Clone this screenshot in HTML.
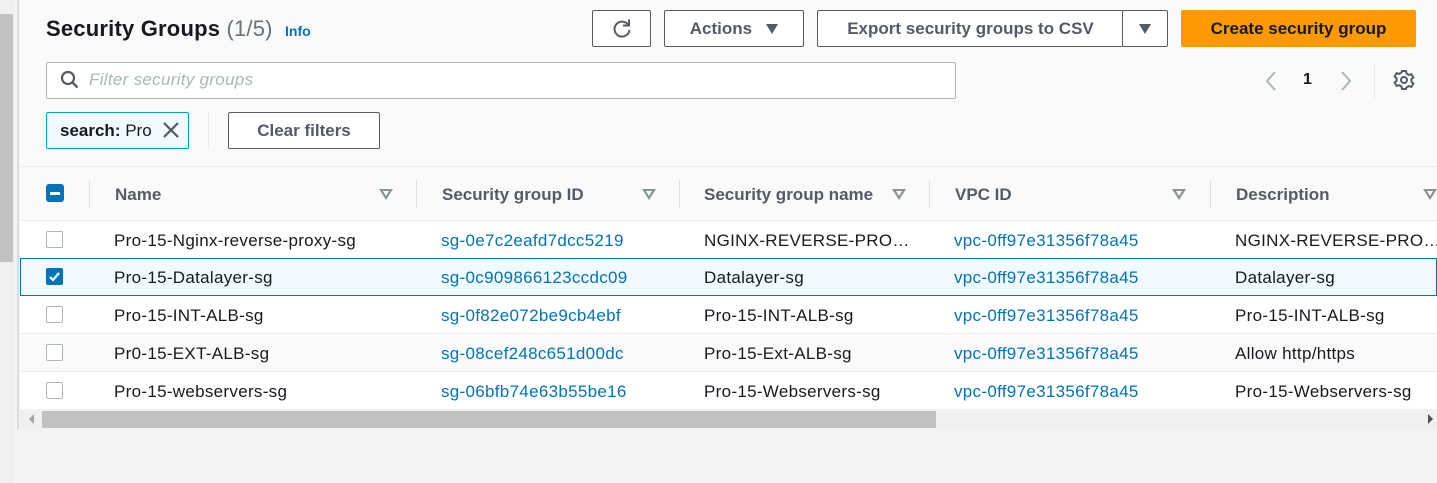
<!DOCTYPE html>
<html><head><style>
*{box-sizing:border-box;margin:0;padding:0}
body{width:1437px;height:483px;overflow:hidden;background:#f2f3f3;font-family:"Liberation Sans",sans-serif;position:relative;color:#16191f}
.abs{position:absolute}
.lsb{left:0;top:0;width:14px;height:483px;background:#f0f0f0}
.lsb .th{position:absolute;left:0;top:14px;width:13px;height:248px;background:#c1c1c1}
.vline{left:17px;top:0;width:2px;height:430px;background:#ddd}
.panel{left:20px;top:0;width:1417px;height:430px;background:#fafafa}
.btn{position:absolute;border:1px solid #545b64;border-radius:2px;background:#fff;font-weight:bold;font-size:17px;color:#545b64;display:flex;align-items:center;justify-content:center}
.tri{display:inline-block;width:0;height:0;border-left:6px solid transparent;border-right:6px solid transparent;border-top:10px solid #545b64}
.ftri{position:absolute;width:0;height:0;border-left:7px solid transparent;border-right:7px solid transparent;border-top:11px solid #879596}
.ftri::after{content:"";position:absolute;left:-3px;top:-9px;border-left:3px solid transparent;border-right:3px solid transparent;border-top:5px solid #fafafa}
.hd{position:absolute;top:185px;font-weight:bold;font-size:17px;color:#545b64}
.sep{position:absolute;top:180px;width:1px;height:28px;background:#e0e0e0}
.row{position:absolute;left:20px;width:1417px;height:38px;background:#fff;border-top:1px solid #eaeded;font-size:17px;letter-spacing:0.3px}
.row span{position:absolute;top:10px;white-space:nowrap}
.row .l{color:#0073bb}
.cb{position:absolute;left:26px;top:10px;width:17px;height:17px;border:1px solid #aab7b8;border-radius:2px;background:#fff}
</style></head><body>
<div class="abs lsb"><div class="th"></div></div>
<div class="abs vline"></div>
<div class="abs panel"></div>
<div class="abs" style="left:46px;top:16px;font-size:22px;font-weight:bold;letter-spacing:0.2px">Security Groups <span style="font-weight:normal;color:#687078">(1/5)</span></div>
<div class="abs" style="left:285px;top:23px;font-size:14px;font-weight:bold;color:#0073bb">Info</div>

<div class="btn" style="left:592px;top:10px;width:59px;height:37px"><svg width="22" height="22" viewBox="0 0 22 22"><path d="M17 6.5A7.5 7.5 0 1 0 18.5 12" fill="none" stroke="#545b64" stroke-width="2"/><path d="M12 5.5h6v-6" fill="none" stroke="#545b64" stroke-width="2" transform="translate(0 2)"/></svg></div>
<div class="btn" style="left:664px;top:10px;width:140px;height:37px">Actions&nbsp;&nbsp;&nbsp;<span class="tri"></span></div>
<div class="btn" style="left:817px;top:10px;width:306px;height:37px;border-right:none">Export security groups to CSV</div>
<div class="btn" style="left:1122px;top:10px;width:46px;height:37px"><span class="tri"></span></div>
<div class="btn" style="left:1181px;top:10px;width:235px;height:37px;border-color:#f90;color:#16191f;background:#f90">Create security group</div>

<div class="abs" style="left:46px;top:62px;width:910px;height:37px;background:#fff;border:1px solid #aab7b8;border-radius:2px"></div>
<svg class="abs" style="left:60px;top:70px" width="20" height="20" viewBox="0 0 20 20"><circle cx="8" cy="8" r="6" fill="none" stroke="#545b64" stroke-width="2.2"/><path d="M12.5 12.5l5 5" stroke="#545b64" stroke-width="2.4"/></svg>
<div class="abs" style="left:89px;top:70px;font-size:17px;font-style:italic;color:#aab7b8;letter-spacing:0.3px">Filter security groups</div>

<svg class="abs" style="left:1264px;top:70px" width="14" height="22"><path d="M11 2L3 11l8 9" fill="none" stroke="#aab7b8" stroke-width="2"/></svg>
<div class="abs" style="left:1303px;top:71px;font-size:16px;font-weight:bold">1</div>
<svg class="abs" style="left:1339px;top:70px" width="14" height="22"><path d="M3 2l8 9-8 9" fill="none" stroke="#aab7b8" stroke-width="2"/></svg>
<div class="abs" style="left:1374px;top:62px;width:1px;height:37px;background:#eaeded"></div>
<svg class="abs" style="left:1393px;top:69px" width="22" height="22" viewBox="0 0 22 22"><path d="M9 2h4l.6 2.6 2.2 1.3 2.6-.8 2 3.4-2 1.8v2.4l2 1.8-2 3.4-2.6-.8-2.2 1.3L13 20H9l-.6-2.6-2.2-1.3-2.6.8-2-3.4 2-1.8V9.3l-2-1.8 2-3.4 2.6.8 2.2-1.3z" fill="none" stroke="#545b64" stroke-width="2" stroke-linejoin="round"/><circle cx="11" cy="11" r="3" fill="none" stroke="#545b64" stroke-width="2"/></svg>

<div class="abs" style="left:46px;top:112px;width:143px;height:37px;background:#f1faff;border:1px solid #00a1c9;border-radius:2px;font-size:17px;padding:8px 0 0 13px"><b>search:</b> Pro</div>
<svg class="abs" style="left:162px;top:121px" width="18" height="18"><path d="M2 2l14 14M16 2L2 16" stroke="#545b64" stroke-width="2.2"/></svg>
<div class="abs" style="left:208px;top:112px;width:1px;height:37px;background:#eaeded"></div>
<div class="btn" style="left:228px;top:112px;width:152px;height:37px">Clear filters</div>

<div class="abs" style="left:20px;top:166px;width:1417px;height:1px;background:#eaeded"></div>
<div class="abs" style="left:46px;top:184px;width:18px;height:18px;background:#0073bb;border-radius:3px"><div style="position:absolute;left:4px;top:8px;width:10px;height:2.5px;background:#fff"></div></div>
<div class="sep" style="left:89px"></div><div class="sep" style="left:416px"></div><div class="sep" style="left:679px"></div><div class="sep" style="left:929px"></div><div class="sep" style="left:1210px"></div>
<div class="hd" style="left:115px">Name</div><div class="ftri" style="left:379px;top:189px"></div>
<div class="hd" style="left:442px">Security group ID</div><div class="ftri" style="left:642px;top:189px"></div>
<div class="hd" style="left:704px">Security group name</div><div class="ftri" style="left:892px;top:189px"></div>
<div class="hd" style="left:955px">VPC ID</div><div class="ftri" style="left:1172px;top:189px"></div>
<div class="hd" style="left:1236px">Description</div><div class="ftri" style="left:1423px;top:189px"></div>

<div class="row" style="top:220px"><div class="cb"></div><span style="left:94px">Pro-15-Nginx-reverse-proxy-sg</span><span class="l" style="left:421px">sg-0e7c2eafd7dcc5219</span><span style="left:684px">NGINX-REVERSE-PRO…</span><span class="l" style="left:934px">vpc-0ff97e31356f78a45</span><span style="left:1215px">NGINX-REVERSE-PRO…</span></div>
<div class="row" style="top:258px;background:#f1faff;border:1px solid #0073bb"><div class="cb" style="left:25px;top:9px;background:#0073bb;border-color:#0073bb"><svg width="15" height="15" style="position:absolute;left:0;top:0"><path d="M3 8l3 3 6-7" fill="none" stroke="#fff" stroke-width="2.2"/></svg></div><span style="left:93px;top:9px">Pro-15-Datalayer-sg</span><span class="l" style="left:420px;top:9px">sg-0c909866123ccdc09</span><span style="left:683px;top:9px">Datalayer-sg</span><span class="l" style="left:933px;top:9px">vpc-0ff97e31356f78a45</span><span style="left:1214px;top:9px">Datalayer-sg</span></div>
<div class="row" style="top:296px;border-top:none"><div class="cb"></div><span style="left:94px">Pro-15-INT-ALB-sg</span><span class="l" style="left:421px">sg-0f82e072be9cb4ebf</span><span style="left:684px">Pro-15-INT-ALB-sg</span><span class="l" style="left:934px">vpc-0ff97e31356f78a45</span><span style="left:1215px">Pro-15-INT-ALB-sg</span></div>
<div class="row" style="top:333px;background:#fafafa"><div class="cb"></div><span style="left:94px">Pr0-15-EXT-ALB-sg</span><span class="l" style="left:421px">sg-08cef248c651d00dc</span><span style="left:684px">Pro-15-Ext-ALB-sg</span><span class="l" style="left:934px">vpc-0ff97e31356f78a45</span><span style="left:1215px">Allow http/https</span></div>
<div class="row" style="top:371px"><div class="cb"></div><span style="left:94px">Pro-15-webservers-sg</span><span class="l" style="left:421px">sg-06bfb74e63b55be16</span><span style="left:684px">Pro-15-Webservers-sg</span><span class="l" style="left:934px">vpc-0ff97e31356f78a45</span><span style="left:1215px">Pro-15-Webservers-sg</span></div>

<div class="abs" style="left:20px;top:409px;width:1417px;height:21px;background:#f0f0f0"></div>
<div class="abs" style="left:42px;top:411px;width:894px;height:17px;background:#c1c1c1"></div>
<div class="abs" style="left:29px;top:414px;border-top:5px solid transparent;border-bottom:5px solid transparent;border-right:5px solid #a3a3a3"></div>
<div class="abs" style="left:1428px;top:414px;border-top:5px solid transparent;border-bottom:5px solid transparent;border-left:5px solid #505050"></div>
</body></html>
